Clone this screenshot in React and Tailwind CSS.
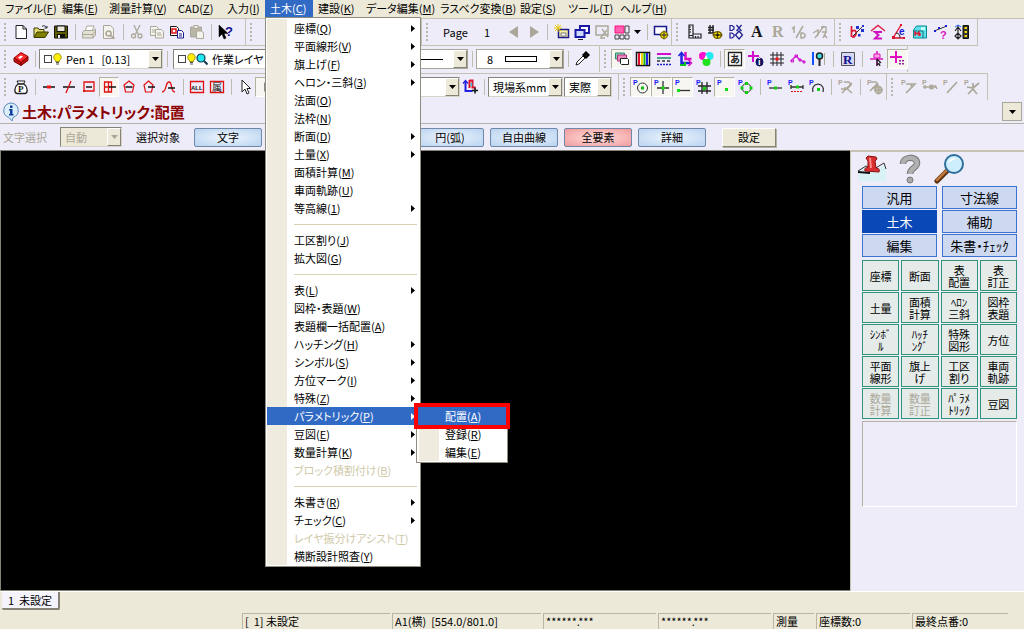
import React from "react";

const G = "#aca899";
const P = { t: "P", x: 0, y: 6, s: 7, f: "#1a1aff", b: 1 };
const PG = { t: "P", x: 0, y: 6, s: 7, f: G, b: 1 };

/* Each shape is [path, stroke, fill, stroke width]; objects are small letters. */
const ICONS = {
  new: [["M3 1.5h7l3.500 3.500v9.500h-10.500z", "#222", "#fff"], ["M10 1.500v3.500h3.500", "#222"]],
  open: [["M1 13V4h4l1 1.500h5V8", "#3a3a00", "#e8e070"], ["M1 13.500L4 8h11.500l-3.500 5.500z", "#3a3a00", "#808000"], ["M9 2.500c2-1.500 4-.5 4.500 1.500m-2 0h2.500v-2", "#222"]],
  save: [["M1.500 2h13v12h-13z", "#111", "#5c5c00"], ["M4 2h8v5.500h-8z", "#111", "#ece9d8"], ["M4 10h8v4h-8z", "none", "#111"], ["M5 11h2v3H5z", "none", "#ece9d8"]],
  print: [["M4 7l2-5h7l-2 5", G, "#fff"], ["M1.500 8l2-1.500h9l2-1.500v6l-2.500 3H1.500z", G, "#e3e0d4"], ["M2 10.500h10M12 14v-4l2.500-3", G]],
  preview: [["M2.500 1.500h7l3 3v10h-10z", G, "#f4f2ec"], ["M10 9.500a2.500 2.500 0 1 1-5 0a2.500 2.500 0 1 1 5 0M9.500 11.500l4 3", G, "none", 1.7]],
  cut: [["M5 1l4 9M11 1L6.500 10", G, "none", 1.3], ["M6.500 12a2 2 0 1 1-4 0a2 2 0 1 1 4 0M13 12a2 2 0 1 1-4 0a2 2 0 1 1 4 0", G, "none", 1.300]],
  copy: [["M1.500 2.500h6l2 2v7h-8z", G, "#f4f2ec"], ["M6.500 5.500h6l2 2v6.500h-8z", G, "#f4f2ec"], ["M3 6h3M3 8h3M8 9h4M8 11h5", G]],
  copy2: [["M1.500 2.500h6l2 2v7h-8z", "#111", "#fff"], ["M3 5h4v4H3z", "#e01010", "none", 1.500], ["M8.500 6.500h4l2 2v5.500h-6z", "#1a1a8c", "#fff"], ["M10 10h3M10 12h3", "#1a1a8c"]],
  paste: [["M1.500 3h11v10h-11z", G, "#b9b5a7"], ["M5 1.500h4v3H5z", G, "#eee"], ["M7.500 7h5l2 2v5.500h-7z", G, "#f4f2ec"]],
  help: [["M2 1v12l3-3 2 5 2-1-2-4.500h4z", "#000", "#000", 0.5], { t: "?", x: 8, y: 12, s: 13, f: "#10108c", b: 1 }],
  prev: [["M12 2v12L3 8z", "none", G]],
  next: [["M4 2v12l9-6z", "none", G]],
  viewNew: [["M4.500 5.500h10v8h-10z", "#1a1a8c", "#f6f0a0", 1.500], ["M7 9h5v3H7z", "#777", "#fff"], ["M4 0v8M0 4h8M1 1l6 6M7 1L1 7", "#e8c800"]],
  viewCopy: [["M6 2h9v7H6z", "#1a1aa8", "#fff", 2], ["M1.500 6h9v7h-9z", "#1a1aa8", "#cfd8ff", 2], ["M4 15.500h5", "#222"]],
  viewDel: [["M2 2h12v9H2z", G, "none", 1.500], ["M6 14h5M8 5l6 8M13 6l-6 7", G, "none", 1.300]],
  viewGrid: [["M1 2h9v7H1z", "#ff1080", "#ff60b0"], ["M11 2h4v7h-4zM1 11h4v4H1zM6 11h4v4H6zM11 11h4v4h-4z", "#444"]],
  viewSet: [["M1.500 2.500h12v8h-12z", "#1a1a8c", "#fff", 1.500], ["M14.500 11a3.500 3.500 0 1 1-7 0a3.500 3.500 0 1 1 7 0M11 6.500v9M6.500 11h9", "#6b5a00", "#f2e000"], ["M12 11a1 1 0 1 1-2 0a1 1 0 1 1 2 0", "#222", "#fff"]],
  ruler: [["M3 1v13h12v-4H7V1zM3 3h2M3 5.500h2M3 8h2M3 11.500h4M7 14v-2M9.500 14v-2M12 14v-2M7 10v2", "#222", "none", 1.200]],
  rulerSet: [["M3 1v8M6 1v8M1 3.500h6M1 6h6M1 9h7", "#222", "none", 1.400], ["M14.500 11a3.500 3 0 1 1-8 0a3.500 3 0 1 1 8 0M10.500 7v8M5.500 11h10", "#6b5a00", "#f2e000", 1.300], ["M11.500 11a1 1 0 1 1-2 0a1 1 0 1 1 2 0", "#222", "#222"]],
  dxdx: [["M2 1.500h2l2 1.500v2l-2 1.500h-2zM2 9h2l2 1.500v2L4 14H2zM8.500 1l5 6M13.500 1l-5 6M11 7l3.500 4-3.500 4-3.500-4z", "#1a1a8c", "none", 1.200]],
  bigA: [{ t: "A", x: 2, y: 13, s: 16, f: "#111", b: 1, serif: 1 }],
  bigR: [{ t: "R", x: 2, y: 13, s: 16, f: G, b: 1, serif: 1 }],
  fracD: [["M1 5l2-2v6M12 2L5 14", G, "none", 1.500], ["M10 9h2l2 1.500v2L12 14h-2z", G, "none", 1.500]],
  fracA: [["M1 9l5-3v6M3 14l9-12M9 3h5v5l-3 6M10 8h5M12 10l3 4", G, "none", 1.300]],
  calcB: [["M2.500 2v11M2.500 8c3-3 6-1 4 3s-4 1-4 2", "#e01030", "none", 1.700], ["M4 12l9-9", "#333"], ["M7 2h3v3H7zM12 5h3v3h-3zM9 10h2.500v2.500H9zM13 1h2v2h-2z", "none", "#2030d0"]],
  sum: [["M1 7l7-5.500 7 5.500", "#e0204a", "none", 1.500], ["M12 8H5l3.500 3-3.500 3.500h7", "#d010c0", "none", 2]],
  angle: [["M10 1L2 14h12", "#e01030", "none", 1.300], ["M5 9c3 0 4 2 4 5", "#222"], { t: "e", x: 8, y: 11, s: 10, f: "#1a1ae0", b: 1 }, ["M1 12h3v3H1zM9 0h2v2H9zM12 13h2v2h-2z", "none", "#e01030"]],
  pic: [["M1.500 6l3-4h10v12h-13z", "#008a98", "#62e0ea"], ["M2 7h9v7", "#107080"], ["M3 12V8l2 2 2-2v4M8 9v3", "#e01030", "none", 1.300], ["M9 3h4v3H9z", "none", "#c0ffff"]],
  dotsQ: [["M1 7l13-5", "#333"], ["M1 6h2v2H1zM5 3h2v2H5zM12 1h2v2h-2z", "none", "#1a1ae0"], { t: "?", x: 7, y: 15, s: 11, f: "#e010c0", b: 1 }],
  signal: [["M4 1v13M1 7l3-4 3 4M4 9l-3 3 3 3 3-3z", "#222", "none", 1.200], ["M1 3l3-2 3 2", "#1a60ff"], ["M9 1.500h5.500v13H9z", "#111", "#333"], ["M10.500 3h2.500v2h-2.500zM10.500 7h2.500v2h-2.500zM10.500 11h2.500v2h-2.500z", "none", "#f0d800"]],
  eraser: [["M1 7l7-5.500 7 4-7 6z", "#a00000", "#ff2a2a"], ["M1 7v3.500l7 4V11.500zM8 14.500l7-5V5.500l-7 6z", "#800000", "#c01010"], ["M5 6.500l3-2 2 1-3 2.500z", "none", "#fff"]],
  dropper: [["M2 14l1-3 6-6 2 2-6 6z", "#222", "#fff"], ["M9 4l3-3 3 3-3 3z", "#000", "#111", 1.500]],
  layers: [["M1.500 2h9v6h-9z", "#2a8a6a", "#8ad0b0"], ["M3.500 4h9v6h-9z", "#b03080", "#f08ac0"], ["M6.500 7.500h7l1 1v5h-7l-1-1z", "#222", "#fff"]],
  colors: [["M1.500 1.500h13v13h-13z", "#111", "#fff", 1.500], ["M4 2v12", "#e01030", "none", 2], ["M7 2v12", "#f0d000", "none", 2], ["M9.500 2v12", "#10b010", "none", 2], ["M12 2v12", "#2020e0", "none", 2]],
  lines: [["M1 3h14", "#d010d0", "none", 2], ["M1 7h14", "#109060", "none", 1.500], ["M1 10h3m2 0h3m2 0h3", "#333", "none", 1.500], ["M1 13.500h2m1 0h2m1 0h2m1 0h2m1 0h2", "#2020c0", "none", 1.500]],
  axis: [["M4.500 2v10h9", "#2020e0", "none", 2.5], ["M8.500 1v7h6", "#e010c0", "none", 2.5], ["M1.500 5l3-3.500 3 3.500", "#2020e0", "none", 1.500], ["M11.500 9l3 3-3 3", "#e010c0", "none", 1.500], ["M3 14h5v-3", "#10c020", "none", 2]],
  rgb: [["M9 5a4 4 0 1 1-8 0a4 4 0 1 1 8 0", "none", "#ff10d0"], ["M15.500 5a4 4 0 1 1-8 0a4 4 0 1 1 8 0", "none", "#20e8f0"], ["M12.500 11a4 4 0 1 1-8 0a4 4 0 1 1 8 0", "none", "#20e020"], ["M8 4l2 4H6z", "none", "#fff"]],
  boxA: [["M1.500 1.500h13v13h-13z", "#222", "#fff", 1.300], { t: "あ", x: 3, y: 12, s: 10, f: "#222", b: 1 }],
  plusI: [["M5 0v11M0 5h11", "#d010d0", "none", 2], ["M15 11a3.500 4 0 1 1-7 0a3.500 4 0 1 1 7 0", "#101060", "#101060"], { t: "i", x: 10, y: 14, s: 9, f: "#fff", b: 1 }],
  grid: [["M4 1v14M8 1v14M12 1v14M1 4h14M1 8h14M1 12h14", "#222"], ["M6.500 6.500h3v3h-3z", "none", "#ff1010"]],
  poly: [["M1 10l5-5 4 4 5 2", "#d010d0", "none", 1.300], ["M1 9h2.500v2H1zM5 4h2.500v2H5zM9 8h2v2H9zM13 10h2v2h-2z", "#d010d0"]],
  pin: [["M2 1v13", "#1050ff", "none", 2], ["M11.500 5a3 3 0 1 1-6 0a3 3 0 1 1 6 0", "#222", "#40e0e0", 1.500], ["M8.500 8v7", "#222", "none", 2], ["M13.500 2v12", G, "none", 1]],
  boxR: [["M1.500 1.500h13v13h-13z", "#555", "#d5d8f5"], { t: "R", x: 3, y: 13, s: 13, f: "#10108c", b: 1, serif: 1 }],
  snapBox: [["M8 0v15M1 8h13", "#e010c0", "none", 1.500], ["M5 3h6v4H5z", "#e010c0", "#ffa0e0"], ["M8 8v6l2-1.500 1 2.500M8 8l4 4", "#222", "none", 1.300]],
  plusDots: [["M6 0v12M0 6h12", "#e010c0", "none", 2], ["M9 9h2v1.500H9zM12 9h2v1.500h-2zM9 12h2v1.500H9zM12 12h2v1.500h-2z", "none", "#902090"]],
  bag: [["M4 2h8l-1.500 3h-5z", "#222", "#fff"], ["M5 5C1 8 1 14 4 14.500h8c3-.5 3-6.500-1-9.500z", "#222", "#fff", 1.300], { t: "P", x: 5, y: 13, s: 9, f: "#111", b: 1, serif: 1 }],
  mid: [["M2 8h12", "#111", "none", 1.500], ["M6 6.500h4v3H6z", "none", "#ff1010"]],
  cross: [["M2 8h12", "#111", "none", 1.500], ["M10 2L5 14", "#e01010", "none", 1.300]],
  rect: [["M3 3h10v9H3z", "#e01010", "none", 1.300], ["M5 8h6", "#111", "none", 1.500], ["M2 11h2v2H2z", "none", "#e01010"]],
  rectX: [["M3.500 3h7v10h-7zM3.500 8h5M7.500 3v10", "#e01010", "none", 1.300], ["M8 8h7", "#111", "none", 1.500]],
  penta: [["M8 2l5 4-1.500 7h-7L3 6z", "#e01010", "none", 1.200], ["M4.500 8h7", "#111", "none", 1.500]],
  pentaX: [["M7.500 2l4.500 4-1.500 7h-6L3 6z", "#e01010", "none", 1.200], ["M7 8h7", "#111", "none", 1.500]],
  curve: [["M1 13c5 0 3-10 7-10s1 10 6 10", "#e01010", "none", 1.300], ["M7 9h7", "#111", "none", 1.500]],
  all: [["M1.500 2.500h13v11h-13z", "#e01010", "none", 1.300], { t: "ALL", x: 2, y: 11, s: 6, f: "#111", b: 1 }],
  zoku: [["M1.500 2.500h13v11h-13z", "#e01010", "none", 1.300], { t: "属", x: 3, y: 12, s: 10, f: "#111" }],
  cursor: [["M5 1v12l3-3 2 5 2-1-2-4.500h3.500z", "#222", "#fff"]],
  area: [["M8 3.500h7v9H8z", "#222"]],
  axis2: [["M3.500 2v10h7", "#2020e0", "none", 2], ["M1 4.500l2.500-3 2.500 3", "#2020e0", "none", 1.300], ["M7.500 1v8M7.500 1.500h3v7h3", "#e01030", "none", 2], ["M10 11.500h6M13 8.500v6", "#111", "none", 1.500], ["M9.500 4v3", "#20d0d0", "none", 1.500]],
  sCenter: [P, ["M14.500 9a5 5 0 1 1-10 0a5 5 0 1 1 10 0", "#333"], ["M8 7.500h3v3H8z", "none", "#10c010"]],
  sCross: [P, ["M9 2v13M3 9h12", "#333", "none", 1.300], ["M7.500 7.500h3v3h-3z", "none", "#10e010"]],
  sEnd: [P, ["M3 11.500h12", "#333", "none", 1.300], ["M2 10h3v3H2z", "none", "#10e010"]],
  sGrid: [P, ["M6 3v12M11 3v12M2 7h13M2 12h13", "#222", "none", 1.300], ["M7 8h3v3H7z", "none", "#10d010"]],
  sFree: [P, ["M8 9h3v3H8z", "none", "#10e010"]],
  sQuad: [P, ["M13 9a4.500 4.500 0 1 1-9 0a4.500 4.500 0 1 1 9 0", "#333"], ["M7 3h3v3H7zM7 12h3v3H7zM2.500 7.500h3v3h-3zM11.500 7.500h3v3h-3z", "none", "#10d010"]],
  sMid: [P, ["M2 9h13", "#333", "none", 1.300], ["M7 7.500h3v3H7z", "none", "#10d010"]],
  sDiv: [P, ["M3 8h12M3 6v4M15 6v4", "#333", "none", 1.300], ["M8 6.500h3v3H8z", "none", "#10d010"], ["M3 12.500h2m1 0h2m1 0h2m1 0h2", "#e01010"]],
  sArc: [P, ["M4 13a5.500 5.500 0 1 1 10 0", "#333", "none", 1.300], ["M8 9h3v3H8z", "none", "#10d010"]],
  gX: [PG, ["M6 3h5l2 3-3 3H6M4 14L14 4M8 9l6 5M3 10h4", G, "none", 1.500]],
  gGear: [PG, ["M4 3h5l2 3-3 3H5M3 12l8-8", G, "none", 1.500], ["M15 11a3.500 3.500 0 1 1-7 0a3.500 3.500 0 1 1 7 0M11.500 6.500v9M7 11h9", G, "#c8c4b6", 1.300]],
  gT: [PG, ["M5 5h9L5 14M10 5l1 4", G, "none", 1.700]],
  gLine: [PG, ["M1 8h14M3 6v4M8 6.500h3v3H8zM13 6l2 4", G, "none", 1.300]],
  gSlash: [PG, ["M14 3L4 14", G, "none", 1.700]],
  gStar: [PG, ["M9 4v6L4 15M9 10l4 5M3 8l6 1 6-5", G, "none", 1.700]],
};

function Icon({ name }) {
  return (
    <svg viewBox="0 0 16 16" className="h-4 w-4 shrink-0" aria-hidden="true">
      {ICONS[name].map((s, i) =>
        Array.isArray(s) ? (
          <path key={i} d={s[0]} stroke={s[1] || "none"} fill={s[2] || "none"} strokeWidth={s[3] || 1} />
        ) : (
          <text key={i} x={s.x} y={s.y} fontSize={s.s} fill={s.f} fontWeight={s.b ? 700 : 400} fontFamily={s.serif ? "Liberation Serif, serif" : "Liberation Sans, Noto Sans CJK JP, sans-serif"}>
            {s.t}
          </text>
        )
      )}
    </svg>
  );
}

/* A leading "*" marks a pressed tool; "|" is a separator. */
function Tools({ list, wide }) {
  return list.split(" ").map((raw, i) => {
    if (raw === "|") return <Sep key={i} />;
    const on = raw[0] === "*";
    const name = on ? raw.slice(1) : raw;
    return (
      <button
        key={i}
        type="button"
        aria-label={name}
        aria-pressed={on}
        className={
          "flex h-5 shrink-0 items-center justify-center border " +
          (wide ? "w-[21px] " : "w-5 ") +
          (on ? "border-t-[#b5b1a0] border-l-[#b5b1a0] border-r-white border-b-white bg-[#f7f6f1]" : "border-transparent")
        }
      >
        <Icon name={name} />
      </button>
    );
  });
}

const Sep = () => (
  <span className="flex w-2 shrink-0 justify-center">
    <span className="h-4 w-px bg-[#c0bdb0]" />
  </span>
);

function Section({ className, children }) {
  return (
    <div className={"flex h-[26px] shrink-0 items-center border-r border-[#c5c2b4] " + className}>
      <span className="mr-[5px] ml-1 h-[18px] shrink-0 border-l-2 border-dotted border-[#b9b6ab]" />
      {children}
    </div>
  );
}

function Combo({ className, label, value, children, disabled }) {
  return (
    <div
      className={
        "flex h-5 shrink-0 items-center border border-t-[#858276] border-l-[#858276] border-r-[#d8d5c8] border-b-[#d8d5c8] " +
        (disabled ? "bg-[#ece9d8] text-[#aca899] " : "bg-white ") +
        className
      }
    >
      {children}
      <select aria-label={label} disabled={disabled} className="h-full min-w-0 flex-1 appearance-none bg-transparent pl-1 leading-4">
        <option>{value}</option>
      </select>
      <span className="pointer-events-none flex h-full w-[14px] shrink-0 items-center justify-center border border-t-white border-l-white border-r-[#858276] border-b-[#858276] bg-[#ece9d8]">
        <Caret />
      </span>
    </div>
  );
}

const Caret = () => (
  <svg viewBox="0 0 7 4" className="h-1 w-[7px]" aria-hidden="true">
    <path d="M0 0h7L3.5 4z" fill="currentColor" />
  </svg>
);

const Swatch = () => <span className="ml-1 h-2 w-2 shrink-0 border border-[#444] bg-white" />;
const Bulb = () => (
  <svg viewBox="0 0 9 12" className="ml-px h-3 w-[9px] shrink-0" aria-hidden="true">
    <path d="M4.500.5a3.800 3.800 0 0 1 2 7v1h-4v-1a3.800 3.800 0 0 1 2-7z" fill="#ffef00" stroke="#8a8200" strokeWidth=".8" />
    <path d="M3 9.500h3M3 11h3" stroke="#555" />
  </svg>
);
const Lens = () => (
  <svg viewBox="0 0 12 12" className="h-3 w-3 shrink-0" aria-hidden="true">
    <path d="M9 5a4 4 0 1 1-8 0a4 4 0 1 1 8 0" fill="#20e8f0" stroke="#103a50" strokeWidth="1.200" />
    <path d="M8 8l3.500 3.500" stroke="#103a50" strokeWidth="2" />
  </svg>
);

function Label({ text }) {
  const [name, key] = text.split("|");
  return (
    <>
      {name}(<u className="underline-offset-1">{key}</u>)
    </>
  );
}

/* ">" opens a submenu, "-" is a divider, "x" is unavailable, "!" is the open entry. */
const MENU = [
  ">座標|Q", ">平面線形|V", ">旗上げ|F", ">ヘロン・三斜|3", " 法面|O", " 法枠|N", ">断面|D", ">土量|X", " 面積計算|M", " 車両軌跡|U", ">等高線|1", "-",
  " 工区割り|J", " 拡大図|G", "-",
  ">表|L", " 図枠・表題|W", " 表題欄一括配置|A", ">ハッチング|H", ">シンボル|S", ">方位マーク|I", ">特殊|Z", "!パラメトリック|P", ">豆図|E", ">数量計算|K", "xブロック積割付け|B", "-",
  ">朱書き|R", ">チェック|C", "xレイヤ振分けアシスト|T", " 横断設計照査|Y",
];

function DropMenu() {
  return (
    <ul role="menu" className="absolute top-full left-0 z-10 -mt-px w-[156px] border border-[#8f8c7e] bg-white p-px text-black">
      {MENU.map((m, i) => {
        const kind = m[0];
        if (kind === "-")
          return (
            <li key={i} role="separator" className="flex h-[14px] items-center">
              <span className="h-full w-5 bg-[#efecdf]" />
              <span className="mr-0.5 ml-[7px] h-px flex-1 bg-[#d8d3b4]" />
            </li>
          );
        const open = kind === "!";
        return (
          <li key={i} role="none" className="relative flex h-[18px]">
            {!open && <span className="h-full w-5 shrink-0 bg-[#efecdf]" />}
            <button
              type="button"
              role="menuitem"
              disabled={kind === "x"}
              className={
                "flex min-w-0 flex-1 items-center justify-between pr-1 whitespace-nowrap " +
                (open ? "bg-[#316ac5] pl-[27px] text-white" : kind === "x" ? "pl-[7px] text-[#cfc9a8]" : "pl-[7px]")
              }
            >
              <span>
                <Label text={m.slice(1)} />
              </span>
              {(kind === ">" || open) && (
                <svg viewBox="0 0 4 7" className="h-[7px] w-1" aria-hidden="true">
                  <path d="M0 0v7l4-3.500z" fill="currentColor" />
                </svg>
              )}
            </button>
            {open && <SubMenu />}
          </li>
        );
      })}
    </ul>
  );
}

function SubMenu() {
  return (
    <ul role="menu" className="absolute -top-0.5 left-[149px] z-20 w-[92px] border border-[#8f8c7e] bg-white p-px text-black">
      {["配置|A", "登録|R", "編集|E"].map((m, i) => (
        <li key={m} role="none" className="relative flex h-[18px]">
          {i > 0 && <span className="ml-px h-full w-5 bg-[#efecdf]" />}
          <button type="button" role="menuitem" className={"flex-1 text-left whitespace-nowrap " + (i ? "pl-1.5" : "bg-[#316ac5] pl-[27px] text-white")}>
            <Label text={m} />
          </button>
          {i === 0 && <span className="pointer-events-none absolute -inset-x-1 -inset-y-1 z-10 border-4 border-[#ff0000]" />}
        </li>
      ))}
    </ul>
  );
}

const BAR = ["ファイル|F", "編集|E", "測量計算|V", "CAD|Z", "入力|I", "土木|C", "建設|K", "データ編集|M", "ラスベク変換|B", "設定|S", "ツール|T", "ヘルプ|H"];

function ModeButton({ children, hot }) {
  return (
    <button
      type="button"
      className={
        "h-[19px] w-[68px] shrink-0 rounded-xs border border-[#6f87a8] leading-4 " +
        (hot ? "bg-radial from-[#fde0e0] to-[#f09a9a]" : "bg-radial from-[#eef5fd] to-[#b9d3f0]")
      }
    >
      {children}
    </button>
  );
}

const TILES = [
  "座標", "断面", "表\n配置", "表\n訂正", "土量", "面積\n計算", "ﾍﾛﾝ\n三斜", "図枠\n表題", "ｼﾝﾎﾞ\nﾙ", "ﾊｯﾁ\nﾝｸﾞ", "特殊\n図形", "方位",
  "平面\n線形", "旗上\nげ", "工区\n割り", "車両\n軌跡", "数量\n計算", "数量\n訂正", "ﾊﾟﾗﾒ\nﾄﾘｯｸ", "豆図",
];

function SidePanel() {
  return (
    <aside className="flex w-[174px] shrink-0 flex-col border-t-2 border-l border-[#c5c2b4] bg-[#eeecf9] pr-[7px] pl-[11px]">
      <div className="flex h-[34px] items-center gap-[9px]">
        <button type="button" aria-label="ピン" className="-ml-1.5">
          <svg viewBox="0 0 32 30" className="h-[30px] w-8">
            <path d="M2 16l8-5 12 3 8-3v16H3z" fill="#d8f1f5" />
            <path d="M2 17l8-5 8 3 10-6 2 6" fill="none" stroke="#333" />
            <path d="M2 18l12 1" stroke="#111" strokeWidth="2" />
            <path d="M12 2l8 1 1 2-2 2 1 7c3 0 4 2 3 4l-14-1c-1-2 1-4 3-4l0-6-2-3z" fill="#d83030" stroke="#8a1010" />
            <path d="M14 4l1 10" stroke="#ff8a8a" strokeWidth="2" />
          </svg>
        </button>
        <button type="button" aria-label="ヘルプ">
          <svg viewBox="0 0 26 30" className="h-[30px] w-[26px]">
            <path d="M6 10C6 2 20 2 20 9c0 5-7 5-7 11" fill="none" stroke="#777" strokeWidth="6.500" strokeLinejoin="round" />
            <path d="M6 10C6 2 20 2 20 9c0 5-7 5-7 11" fill="none" stroke="#b0b0b0" strokeWidth="4.500" strokeLinejoin="round" />
            <path d="M16 26a3 3 0 1 1-6 0a3 3 0 1 1 6 0" fill="#a9a9a9" stroke="#777" />
          </svg>
        </button>
        <button type="button" aria-label="検索" className="ml-0.5">
          <svg viewBox="0 0 32 30" className="h-[30px] w-8">
            <path d="M3 27l11-11" stroke="#5a3010" strokeWidth="5" strokeLinecap="round" />
            <path d="M3 26l10-10" stroke="#c07838" strokeWidth="2.500" strokeLinecap="round" />
            <path d="M29 10a9 9 0 1 1-18 0a9 9 0 1 1 18 0" fill="#cdeefc" stroke="#2f6f9c" strokeWidth="2" />
            <path d="M14 9c1-4 6-6 9-4-3 0-6 2-9 4" fill="#fff" />
          </svg>
        </button>
      </div>
      <div className="grid grid-cols-2 gap-x-[5px] gap-y-px text-[13px]">
        {["汎用", "寸法線", "土木", "補助", "編集", "朱書・ﾁｪｯｸ"].map((c) => (
          <button
            key={c}
            type="button"
            className={"h-[23px] border leading-4 whitespace-nowrap " + (c === "土木" ? "border-[#0a48b8] bg-[#0a48b8] text-white" : "border-[#3a74d0] bg-[#ccd9f0]")}
          >
            {c}
          </button>
        ))}
      </div>
      <div className="mt-[3px] grid grid-cols-4 gap-x-0.5 gap-y-px text-[11px]">
        {TILES.map((t) => (
          <button
            key={t}
            type="button"
            disabled={t.startsWith("数量")}
            className="h-[31px] border border-[#2f9478] bg-[#e4ebe9] leading-3 whitespace-pre disabled:text-[#aca899]"
          >
            {t}
          </button>
        ))}
      </div>
      <div className="mt-0.5 h-[86px] border border-t-[#b5b2a6] border-l-[#b5b2a6] border-r-white border-b-white" />
    </aside>
  );
}

const STATUS = ["[  1] 未設定", "A1(横)  [554.0/801.0]", "******.***", "******.***", "測量", "座標数:0", "最終点番:0"];

export default function App() {
  return (
    <div className="flex min-h-screen flex-col overflow-hidden bg-[#ece9d8] text-[11px] leading-4 text-black [font-family:'Noto_Sans_CJK_JP',sans-serif] [font-feature-settings:'palt']">
      <nav className="grid h-[18px] grid-cols-[57px_47px_69px_49px_43px_48px_48px_74px_80px_48px_52px_56px]">
        {BAR.map((b, i) => (
          <div key={b} className={"relative flex items-start " + (i === 5 ? "bg-[#316ac5] text-white" : "")}>
            <button type="button" className="pl-[5px] whitespace-nowrap">
              <Label text={b} />
            </button>
            {i === 5 && <DropMenu />}
          </div>
        ))}
      </nav>

      <header className="border-t border-[#c5c2b4] bg-[#eeecf9]">
        <div className="flex h-[27px] w-fit border-b border-[#c5c2b4]">
          <Section className="w-[246px]">
            <Tools list="new open save | print preview | cut copy copy2 paste | help" />
          </Section>
          <Section className="w-[176px]" />
          <Section className="w-[250px]">
            <span className="w-8 pl-2.5">Page</span>
            <span className="w-8 pl-[13px] text-center">1</span>
            <span className="w-2" />
            <Tools list="prev next | viewNew viewCopy viewDel viewGrid" />
            <button type="button" aria-label="表示メニュー" className="flex w-3 justify-center">
              <Caret />
            </button>
            <Tools list="| viewSet" />
          </Section>
          <Section className="w-[163px]">
            <Tools wide list="ruler rulerSet dxdx bigA bigR fracD fracA" />
          </Section>
          <Section className="w-[143px]">
            <Tools wide list="calcB sum angle pic dotsQ signal" />
          </Section>
        </div>
        <div className="flex h-[27px] w-fit">
          <Section className="w-[600px]">
            <Tools list="eraser |" />
            <Combo className="w-[124px]" label="ペン" value={"Pen 1\u00a0\u00a0\u00a0[0.13]"}>
              <Swatch />
              <Bulb />
            </Combo>
            <Sep />
            <Combo className="ml-0.5 w-[140px]" label="レイヤ" value="作業レイヤ">
              <Swatch />
              <Bulb />
              <Lens />
            </Combo>
            <div className="ml-2 flex h-5 w-[147px] shrink-0 items-center border border-[#a9a69a] bg-white">
              <span className="mr-2.5 h-px flex-1 bg-black" />
              <button type="button" aria-label="線種" className="flex h-full w-[14px] items-center justify-center border border-t-white border-l-white border-r-[#858276] border-b-[#858276] bg-[#ece9d8]">
                <Caret />
              </button>
            </div>
            <Sep />
            <div className="flex h-5 w-[88px] shrink-0 items-center border border-[#a9a69a] bg-white pl-2.5">
              <span>8</span>
              <span className="mx-3 h-1.5 flex-1 border border-black" />
              <button type="button" aria-label="線幅" className="flex h-full w-[14px] items-center justify-center border border-t-white border-l-white border-r-[#858276] border-b-[#858276] bg-[#ece9d8]">
                <Caret />
              </button>
            </div>
            <Tools list="| dropper" />
          </Section>
          <Section className="w-[308px]">
            <Tools list="*layers colors lines axis rgb | *boxA plusI grid poly pin | boxR | snapBox *plusDots" wide />
          </Section>
        </div>
        <div className="flex h-[27px] w-fit border-t border-[#c5c2b4]">
          <Section className="w-[619px]">
            <Tools list="bag | mid cross rect *rectX penta pentaX curve | all zoku | cursor *area" />
            <div className="flex-1" />
            <Combo className="w-[150px]" label="座標系" value="" />
            <Tools list="axis2 |" />
            <Combo className="w-[75px]" label="単位" value="現場系mm" />
            <Combo className="mr-1.5 ml-px w-12" label="縮尺" value="実際" />
          </Section>
          <Section className="w-[268px]">
            <Tools wide list="*sCenter *sCross *sEnd sGrid *sFree sQuad | sMid sDiv sArc | gX | gGear" />
          </Section>
          <Section className="w-[101px]">
            <Tools wide list="gT gLine gSlash gStar" />
          </Section>
        </div>
        <div className="flex h-[23px] items-center gap-0.5 px-0.5">
          <svg viewBox="0 0 18 20" className="h-5 w-[18px]" aria-hidden="true">
            <path d="M9 1a8 7.500 0 0 1 2 14.500l-1 3.500-3-3.500A8 7.500 0 0 1 9 1z" fill="#dceefb" stroke="#5a8ab8" />
            <path d="M8 3.500h2.500v2.500H8zM7 7h3.500v5h1v1.500H7V12h1V8.500H7z" fill="#1040a0" />
          </svg>
          <h1 className="flex-1 text-[15px] leading-5 font-bold text-[#8b0000]">土木:パラメトリック:配置</h1>
          <button type="button" aria-label="表示切替" className="flex h-[19px] w-5 items-center justify-center border border-[#a9a69a] bg-[#ece9d8]">
            <Caret />
          </button>
        </div>
        <div className="flex h-[27px] items-center border-t border-[#b5b2a6] pl-[3px]">
          <span className="w-[57px] text-[#aca899]">文字選択</span>
          <Combo className="w-[62px]" label="文字選択" value="自動" disabled />
          <span className="w-[72px] pl-3.5">選択対象</span>
          <div className="flex gap-1.5">
            <ModeButton>文字</ModeButton>
            <span className="w-[142px]" />
            <ModeButton>円(弧)</ModeButton>
            <ModeButton>自由曲線</ModeButton>
            <ModeButton hot>全要素</ModeButton>
            <ModeButton>詳細</ModeButton>
          </div>
          <button type="button" className="ml-4 h-[19px] w-[54px] border border-t-white border-l-white border-r-[#858276] border-b-[#858276] bg-[#ece9d8] leading-4 shadow-[1px_1px_0_#b5b2a6]">
            設定
          </button>
        </div>
      </header>

      <main className="flex flex-1 bg-[#eeecf9]">
        <div className="flex-1 border-t border-b border-l border-[#858276] bg-black" />
        <SidePanel />
      </main>

      <footer className="border-t border-white">
        <div className="flex h-[21px] items-start pl-0.5">
          <button type="button" className="h-[18px] w-[58px] rounded-b-xs border-r-2 border-b-2 border-[#858276] bg-[#f5f3fc] leading-4 whitespace-pre">
            1  未設定
          </button>
        </div>
        <div className="grid h-4 grid-cols-[148px_149px_113px_113px_41px_94px_96px] gap-x-0.5 pl-[242px]">
          {STATUS.map((s, i) => (
            <span key={i} className="border-t border-l border-[#b9b6a6] pl-0.5 leading-[14px] whitespace-pre">
              {s}
            </span>
          ))}
        </div>
      </footer>
    </div>
  );
}
